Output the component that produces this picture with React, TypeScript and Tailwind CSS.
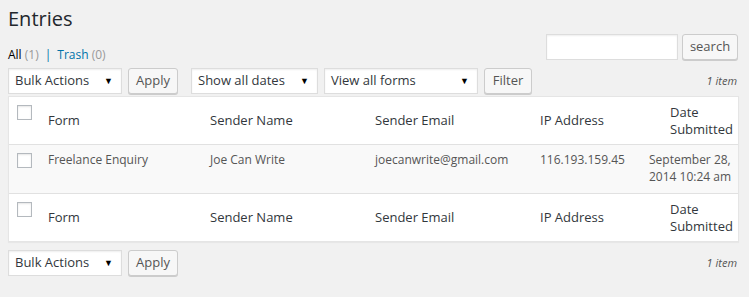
import React from "react";

// ─── Small controls ───────────────────────────────────────────────────────────

function Select({ label, width }: { label: string; width: string }) {
  return (
    <div
      className={`${width} h-[26px] flex items-center justify-between bg-white border border-[#ddd] shadow-[inset_0_1px_2px_rgba(0,0,0,0.07)] pl-[6px] pr-[8px] text-[#32373c]`}
    >
      <span>{label}</span>
      <span className="text-[9px] text-black">▼</span>
    </div>
  );
}

function Button({ children, width }: { children: React.ReactNode; width: string }) {
  return (
    <button
      type="button"
      className={`${width} h-[26px] rounded-[3px] border border-[#ccc] bg-[#f7f7f7] shadow-[0_1px_0_#ccc] text-[#555] text-[13px] flex items-center justify-center`}
    >
      {children}
    </button>
  );
}

function Check() {
  return (
    <span className="block w-[15px] h-[15px] bg-white border border-[#b4b9be] shadow-[inset_0_1px_2px_rgba(0,0,0,0.1)]" />
  );
}

// ─── Table rows ──────────────────────────────────────────────────────────────

const cols = "grid grid-cols-[29px_162px_165px_165px_109px_1fr]";

function HeadRow({ top }: { top?: boolean }) {
  return (
    <div className={`${cols} h-[48px] items-center text-[#32373c] ${top ? "border-b border-[#e1e1e1]" : "border-t border-[#e1e1e1]"}`}>
      <div className="pl-[8px] self-start pt-[8px]">
        <Check />
      </div>
      <div className="pl-[10px]">Form</div>
      <div className="pl-[10px]">Sender Name</div>
      <div className="pl-[10px]">Sender Email</div>
      <div className="pl-[10px]">IP Address</div>
      <div className="pl-[31px] leading-[17px]">
        Date
        <br />
        Submitted
      </div>
    </div>
  );
}

function TableNav({ filters }: { filters?: boolean }) {
  return (
    <div className="flex items-center h-[26px]">
      <Select label="Bulk Actions" width="w-[114px]" />
      <div className="ml-[6px]">
        <Button width="w-[50px]">Apply</Button>
      </div>
      {filters && (
        <>
          <div className="ml-[13px]">
            <Select label="Show all dates" width="w-[127px]" />
          </div>
          <div className="ml-[6px]">
            <Select label="View all forms" width="w-[154px]" />
          </div>
          <div className="ml-[6px]">
            <Button width="w-[48px]">Filter</Button>
          </div>
        </>
      )}
      <span className="ml-auto pr-[1px] italic text-[11px] text-[#555]">1 item</span>
    </div>
  );
}

// ─── Page ────────────────────────────────────────────────────────────────────

export default function App() {
  return (
    <div className="min-h-[297px] bg-[#f1f1f1] font-['Open_Sans',sans-serif] text-[13px] text-[#444] pl-[8px] pr-[11px]">
      <h1 className="pt-[5px] h-[34px] text-[20px] leading-[27px] font-normal text-[#23282d]">Entries</h1>

      <div className="flex items-start justify-between h-[26px]">
        <div className="pt-[12px] text-[12px] text-[#666]">
          <span className="text-black">All</span> <span className="text-[#999]">(1)</span>
          <span className="text-[#0073aa] mx-[6px]">|</span>
          <span className="text-[#0073aa]">Trash</span> <span className="text-[#999]">(0)</span>
        </div>
        <div className="flex items-center gap-[4px]">
          <div className="w-[132px] h-[26px] bg-white border border-[#ddd] shadow-[inset_0_1px_2px_rgba(0,0,0,0.07)]" />
          <Button width="w-[56px]">search</Button>
        </div>
      </div>

      <div className="mt-[8px]">
        <TableNav filters />
      </div>

      <div className="mt-[2px] mr-[-1px] bg-white border border-[#e5e5e5] shadow-[0_1px_1px_rgba(0,0,0,0.04)]">
        <HeadRow top />
        <div className={`${cols} h-[48px] bg-[#f9f9f9] text-[12px] text-[#555] items-start`}>
          <div className="pl-[8px] pt-[8px]">
            <Check />
          </div>
          <div className="pl-[10px] pt-[6px]">Freelance Enquiry</div>
          <div className="pl-[10px] pt-[6px]">Joe Can Write</div>
          <div className="pl-[10px] pt-[6px]">joecanwrite@gmail.com</div>
          <div className="pl-[10px] pt-[6px]">116.193.159.45</div>
          <div className="pl-[10px] pt-[6px] leading-[17px]">
            September 28,
            <br />
            2014 10:24 am
          </div>
        </div>
        <HeadRow />
      </div>

      <div className="mt-[8px]">
        <TableNav />
      </div>
    </div>
  );
}
